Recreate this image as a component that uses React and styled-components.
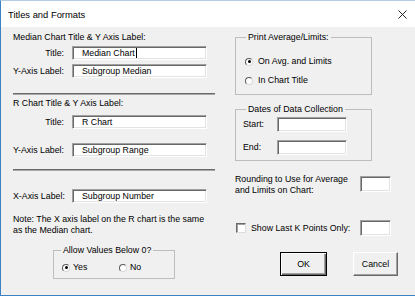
import React from 'react';
import styled, { createGlobalStyle } from 'styled-components';

const GlobalStyle = createGlobalStyle`
  html, body { margin: 0; padding: 0; background: #fff; }
  body { font-family: 'Liberation Sans', Arial, sans-serif; }
  * { box-sizing: border-box; }
`;

const Window = styled.div`
  width: 415px;
  height: 296px;
  display: flex;
  flex-direction: column;
  border-left: 1px solid #3b82c4;
  border-top: 1px solid #b6cde4;
  border-bottom: 1px solid #3b82c4;
  background: #f0f0f0;
  font-size: 8.8px;
  line-height: 11px;
  color: #000;
`;

const TitleBar = styled.div`
  height: 26px;
  flex: none;
  background: #fff;
  display: flex;
  align-items: center;
  justify-content: space-between;
  padding: 0 8px 0 7px;
  font-size: 9.4px;
`;

const Body = styled.div`
  flex: 1;
  display: flex;
  gap: 20px;
  padding: 5px 0 0 12px;
`;

const Column = styled.div`
  width: ${p => p.$width}px;
  display: flex;
  flex-direction: column;
`;

const Heading = styled.div`
  margin-top: ${p => p.$top || 0}px;
  white-space: nowrap;
`;

const Row = styled.div`
  display: flex;
  align-items: center;
  gap: 8px;
  height: ${p => p.$height || 14}px;
  margin-top: ${p => p.$top || 0}px;
`;

const Label = styled.div`
  width: ${p => p.$width}px;
  text-align: ${p => p.$align || 'right'};
  white-space: nowrap;
  flex: none;
`;

const Field = styled.div`
  width: ${p => p.$width}px;
  height: ${p => p.$height || 14}px;
  flex: none;
  background: #fff;
  border: 1px solid;
  border-color: #a0a0a0 #fff #fff #a0a0a0;
  box-shadow: inset 1px 1px 0 #696969, inset -1px -1px 0 #e3e3e3;
  padding-left: 9px;
  display: flex;
  align-items: center;
  white-space: nowrap;
  margin-top: ${p => p.$top || 0}px;
  margin-left: ${p => p.$left || 0}px;
`;

const Caret = styled.span`
  display: inline-block;
  width: 1px;
  height: 10px;
  background: #000;
  margin-left: 1px;
`;

const Separator = styled.div`
  height: 2px;
  margin-top: ${p => p.$top || 0}px;
  background: #6a6a6a;
  border-bottom: 1px solid #a8a8a8;
`;

const Note = styled.div`
  margin-top: ${p => p.$top || 0}px;
`;

const GroupBox = styled.fieldset`
  margin: ${p => p.$top || 0}px 0 0 ${p => p.$left || 0}px;
  padding: 0;
  width: ${p => p.$width}px;
  min-inline-size: 0;
  border: 1px solid #bdbdbd;
`;

const Legend = styled.legend`
  margin-left: ${p => p.$left || 10}px;
  padding: 0 2px;
  line-height: 11px;
`;

const GroupInner = styled.div`
  display: flex;
  flex-direction: ${p => p.$row ? 'row' : 'column'};
  padding: ${p => p.$pad};
`;

const Option = styled.div`
  display: flex;
  align-items: center;
  gap: ${p => p.$gap || 4}px;
  height: 11px;
  width: ${p => (p.$width ? `${p.$width}px` : 'auto')};
  margin-top: ${p => p.$top || 0}px;
`;

const RadioCircle = styled.span`
  width: 8px;
  height: 8px;
  flex: none;
  border-radius: 50%;
  border: 1px solid;
  border-color: #5a5a5a #d8d8d8 #d8d8d8 #5a5a5a;
  background: #fff;
  display: flex;
  align-items: center;
  justify-content: center;
  &::after {
    content: '';
    width: 3px;
    height: 3px;
    border-radius: 50%;
    background: ${p => (p.$checked ? '#000' : 'transparent')};
  }
`;

const CheckBox = styled.span`
  width: 10px;
  height: 10px;
  flex: none;
  margin-left: 1px;
  background: #fff;
  border: 1px solid;
  border-color: #6a6a6a #dcdcdc #dcdcdc #6a6a6a;
  box-shadow: inset 1px 1px 0 #a0a0a0;
`;

const Spread = styled.div`
  display: flex;
  align-items: ${p => p.$align || 'center'};
  justify-content: space-between;
  margin-top: ${p => p.$top || 0}px;
  padding-right: 7px;
`;

const ButtonRow = styled.div`
  display: flex;
  justify-content: flex-end;
  gap: 26px;
  margin-top: ${p => p.$top || 0}px;
`;

const Button = styled.div`
  width: ${p => p.$width}px;
  height: 24px;
  display: flex;
  align-items: center;
  justify-content: center;
  background: #f0f0f0;
  border: 1px solid;
  border-color: ${p => (p.$default ? '#000' : '#fff #696969 #696969 #fff')};
  box-shadow: ${p => (p.$default
    ? 'inset 1px 1px 0 #fff, inset -1px -1px 0 #696969, inset -2px -2px 0 #a0a0a0'
    : 'inset -1px -1px 0 #a0a0a0')};
`;

const CloseIcon = () => (
  <svg width="9" height="9" viewBox="0 0 9 9">
    <path d="M0.5 0.5 L8.5 8.5 M8.5 0.5 L0.5 8.5" stroke="#222" strokeWidth="1" />
  </svg>
);

const Radio = ({ checked, label, top, width, gap }) => (
  <Option $top={top} $width={width} $gap={gap}>
    <RadioCircle $checked={checked} />
    <span>{label}</span>
  </Option>
);

export default function App() {
  return (
    <>
      <GlobalStyle />
      <Window>
        <TitleBar>
          <span>Titles and Formats</span>
          <CloseIcon />
        </TitleBar>
        <Body>
          <Column $width={202}>
            <Heading>Median Chart Title &amp; Y Axis Label:</Heading>
            <Row $top={3}>
              <Label $width={51}>Title:</Label>
              <Field $width={135}>Median Chart<Caret /></Field>
            </Row>
            <Row $top={4}>
              <Label $width={51}>Y-Axis Label:</Label>
              <Field $width={135}>Subgroup Median</Field>
            </Row>
            <Separator $top={15} />
            <Heading $top={3}>R Chart Title &amp; Y Axis Label:</Heading>
            <Row $top={6}>
              <Label $width={51}>Title:</Label>
              <Field $width={135}>R Chart</Field>
            </Row>
            <Row $top={14}>
              <Label $width={51}>Y-Axis Label:</Label>
              <Field $width={135}>Subgroup Range</Field>
            </Row>
            <Separator $top={12} />
            <Row $top={18}>
              <Label $width={51}>X-Axis Label:</Label>
              <Field $width={135}>Subgroup Number</Field>
            </Row>
            <Note $top={11}>
              Note: The X axis label on the R chart is the same<br />
              as the Median chart.
            </Note>
            <GroupBox $top={9} $left={40} $width={122}>
              <Legend $left={7}>Allow Values Below 0?</Legend>
              <GroupInner $row $pad="6px 0 5px 8px">
                <Radio checked label="Yes" width={57} gap={3} />
                <Radio label="No" gap={3} />
              </GroupInner>
            </GroupBox>
          </Column>
          <Column $width={163}>
            <GroupBox $width={137}>
              <Legend>Print Average/Limits:</Legend>
              <GroupInner $pad="13px 0 8px 9px">
                <Radio checked label="On Avg. and Limits" gap={5} />
                <Radio label="In Chart Title" top={8} gap={5} />
              </GroupInner>
            </GroupBox>
            <GroupBox $top={9} $width={137}>
              <Legend>Dates of Data Collection</Legend>
              <GroupInner $pad="2px 0 5px 7px">
                <Row $height={15} $gap={0}>
                  <Label $width={26} $align="left">Start:</Label>
                  <Field $width={70} $height={15} />
                </Row>
                <Row $height={15} $top={8}>
                  <Label $width={26} $align="left">End:</Label>
                  <Field $width={70} $height={15} />
                </Row>
              </GroupInner>
            </GroupBox>
            <Spread $top={13} $align="flex-start">
              <span>Rounding to Use for Average<br />and Limits on Chart:</span>
              <Field $width={31} $height={16} $top={2} />
            </Spread>
            <Spread $top={24}>
              <Option $gap={5}>
                <CheckBox />
                <span>Show Last K Points Only:</span>
              </Option>
              <Field $width={31} $height={16} />
            </Spread>
            <ButtonRow $top={16}>
              <Button $default $width={47}>OK</Button>
              <Button $width={45}>Cancel</Button>
            </ButtonRow>
          </Column>
        </Body>
      </Window>
    </>
  );
}
